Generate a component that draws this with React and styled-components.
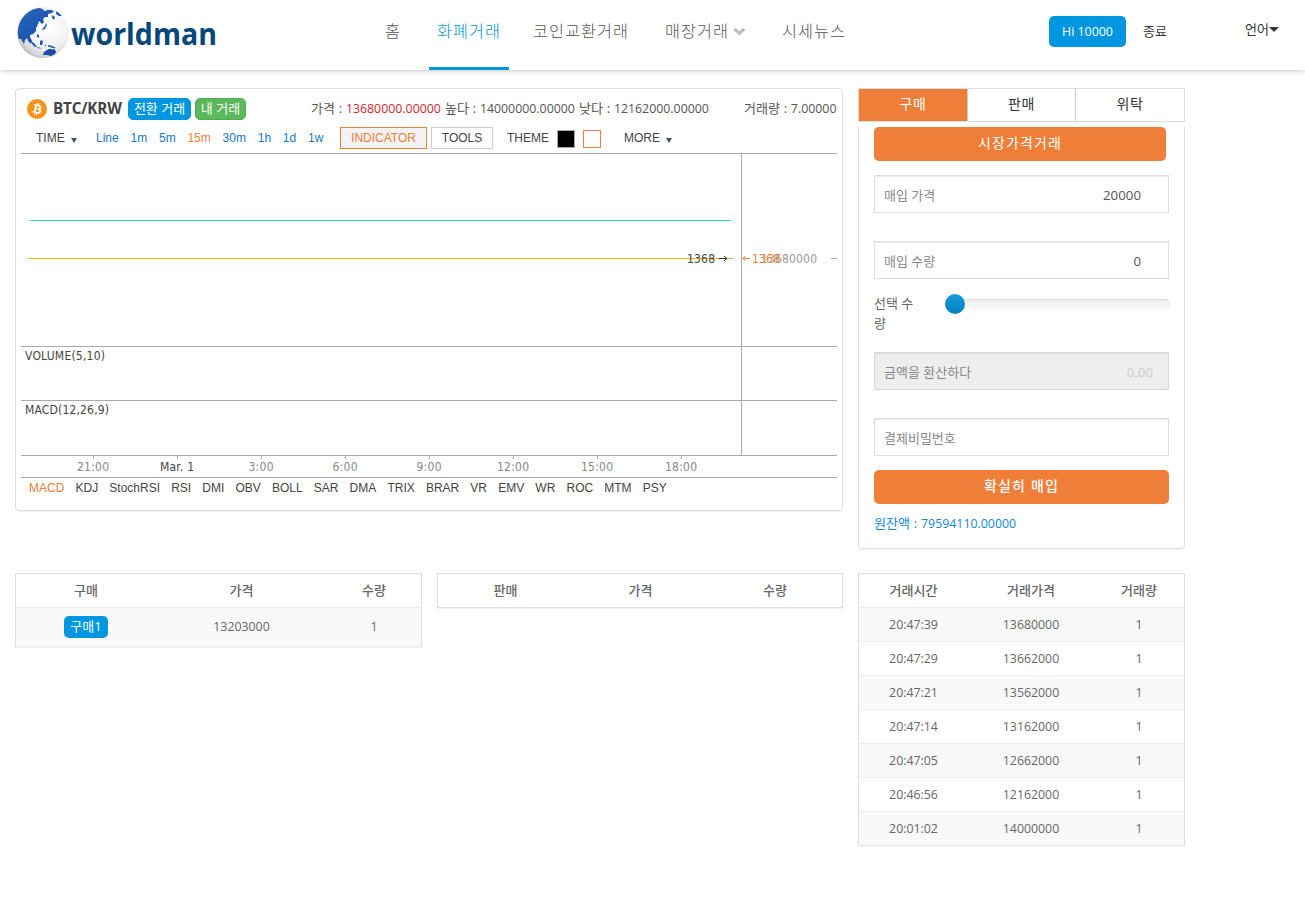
import React from 'react';
import styled, { createGlobalStyle, css } from 'styled-components';

const GlobalStyle = createGlobalStyle`
  * { box-sizing: border-box; }
  body {
    margin: 0;
    background: #fff;
    color: #666;
    font: 13px/20px "Open Sans", "Noto Sans CJK KR", sans-serif;
  }
  #root { height: 898px; overflow: hidden; }
`;

const ORANGE = '#ee7e38';
const BLUE = '#0096e0';

/* ---------- header ---------- */
const Header = styled.header`
  display: flex;
  height: 70px;
  background: #fff;
  box-shadow: 0 1px 5px rgba(0, 0, 0, 0.22);
`;
const Brand = styled.a`
  width: 377px;
  padding: 4px 0 0 15px;
`;
const Nav = styled.nav`
  display: flex;
  width: 672px;
`;
const NavItem = styled.a`
  display: flex;
  align-items: center;
  gap: 4px;
  height: 70px;
  padding: 0 0 5px 8px;
  margin-right: ${(p) => p.$gap}px;
  width: ${(p) => p.$width}px;
  font-size: 16.3px;
  font-weight: 300;
  letter-spacing: 1px;
  white-space: nowrap;
  color: ${(p) => (p.$active ? BLUE : '#555')};
  border-bottom: 3px solid ${(p) => (p.$active ? BLUE : 'transparent')};
`;
const Account = styled.div`
  display: flex;
  align-items: flex-start;
  padding-top: 16px;
  color: #333;
`;
const UserButton = styled.a`
  width: 77px;
  height: 31px;
  border-radius: 5px;
  background: ${BLUE};
  color: #fff;
  font-size: 12.4px;
  font-weight: 500;
  line-height: 31px;
  text-align: center;
`;
const Logout = styled.a`
  margin: 5px 0 0 17px;
`;
const Language = styled.a`
  display: flex;
  align-items: center;
  margin: 3px 0 0 78px;
`;

/* ---------- page ---------- */
const Page = styled.main`
  display: grid;
  grid-template-columns: 828px 327px;
  column-gap: 15px;
  padding: 18px 0 0 15px;
  align-items: start;
`;
const Column = styled.div`
  display: flex;
  flex-direction: column;
`;
const Panel = styled.section`
  height: 423px;
  padding: 0 5px;
  border: 1px solid #ddd;
  border-radius: 4px;
  box-shadow: 0 1px 1px rgba(0, 0, 0, 0.05);
`;
const Ticker = styled.div`
  display: flex;
  align-items: center;
  height: 38px;
  padding: 1px 0 0 6px;
  color: #555;
  white-space: nowrap;
`;
const Pair = styled.strong`
  width: 75px;
  margin-left: 6px;
  padding-bottom: 2px;
  font-size: 15.2px;
  font-weight: 700;
  letter-spacing: -0.15px;
  color: #444;
`;
const Tag = styled.a`
  height: 22px;
  width: ${(p) => p.$width}px;
  margin-right: 4px;
  border-radius: 5px;
  background: ${(p) => (p.$green ? '#5cb85c' : BLUE)};
  border: 1px solid ${(p) => (p.$green ? '#4cae4c' : BLUE)};
  color: #fff;
  font-size: 13px;
  line-height: 19px;
  text-align: center;
`;
const Quote = styled.span`
  margin-left: ${(p) => p.$left || 0}px;
  width: ${(p) => p.$width}px;
  word-spacing: 0.4px;
`;
const Num = styled.span`
  font-size: 12.35px;
  color: ${(p) => p.$color || 'inherit'};
`;
const Toolbar = styled.div`
  display: flex;
  align-items: center;
  height: 26px;
  padding: 0 0 4px 15px;
  font: 12px/20px "Liberation Sans", Arial, sans-serif;
  color: #444;
`;
const Menu = styled.span`
  display: flex;
  align-items: center;
  gap: 6px;
  width: ${(p) => p.$width}px;
`;
const Caret = styled.i`
  margin-top: 5px;
  border: 3.5px solid transparent;
  border-top: 5px solid #435467;
  border-bottom: 0;
`;
const Periods = styled.div`
  display: flex;
  gap: 11.8px;
  width: 244px;
`;
const Period = styled.a`
  color: ${(p) => (p.$active ? ORANGE : '#1478c8')};
`;
const ToolButton = styled.a`
  width: ${(p) => p.$width}px;
  height: 22px;
  margin-right: 4px;
  border: 1px solid ${(p) => (p.$active ? ORANGE : '#ccc')};
  background: ${(p) => (p.$active ? '#f3f3f3' : '#fff')};
  color: ${(p) => (p.$active ? ORANGE : '#444')};
  line-height: 20px;
  text-align: center;
`;
const ThemeLabel = styled.span`
  width: 50px;
  margin-left: 10px;
`;
const Swatch = styled.i`
  width: 18px;
  height: 18px;
  margin: 2px 8px 0 0;
  background: ${(p) => p.$fill};
  border: 1px solid ${(p) => p.$edge};
`;
const MoreMenu = styled(Menu)`
  margin-left: 15px;
`;
const Chart = styled.svg`
  display: block;
  font: 12px "DejaVu Sans Condensed", "DejaVu Sans", sans-serif;
`;
const Indicators = styled.div`
  display: flex;
  gap: 11.15px;
  padding: 1px 0 0 8px;
  font: 12px/19px "Liberation Sans", Arial, sans-serif;
  color: #444;
`;
const Indicator = styled.a`
  color: ${(p) => (p.$active ? ORANGE : 'inherit')};
`;

/* ---------- order form ---------- */
const Tabs = styled.div`
  display: grid;
  grid-template-columns: 109px 108px 108px;
  height: 34px;
  border: 1px solid #ddd;
`;
const Tab = styled.a`
  font-size: 14px;
  letter-spacing: 0.7px;
  line-height: 30px;
  text-align: center;
  color: ${(p) => (p.$active ? '#fff' : '#333')};
  background: ${(p) => (p.$active ? ORANGE : '#fff')};
  border-right: 1px solid #ccc;
  &:last-child { border-right: 0; }
`;
const Form = styled.form`
  display: flex;
  flex-direction: column;
  height: 422px;
  margin-top: 5px;
  padding: 0 15px;
  border: 1px solid #ddd;
  border-top: 0;
  border-radius: 0 0 4px 4px;
  box-shadow: 0 1px 1px rgba(0, 0, 0, 0.05);
`;
const Submit = styled.button`
  width: ${(p) => p.$width}px;
  height: 34px;
  margin-top: ${(p) => p.$top || 0}px;
  padding: 0 0 2px;
  border: 0;
  border-radius: 5px;
  background: ${ORANGE};
  color: #fff;
  font: ${(p) => p.$weight || 400} 14px/32px "Open Sans", "Noto Sans CJK KR", sans-serif;
  letter-spacing: 1.15px;
  text-align: center;
`;
const Field = styled.label`
  display: flex;
  justify-content: space-between;
  align-items: center;
  width: 295px;
  height: 38px;
  margin-top: ${(p) => p.$top}px;
  padding: 2px ${(p) => (p.$disabled ? 15 : 27)}px 0 9px;
  border: 1px solid #ddd;
  box-shadow: inset 0 1px 1px rgba(0, 0, 0, 0.075);
  color: #888;
  ${(p) => p.$disabled && css`background: #eee; border-color: #d8d8d8;`}
`;
const Value = styled.span`
  font-size: 13.3px;
  color: ${(p) => (p.$muted ? '#ccc' : '#555')};
`;
const SliderRow = styled.div`
  display: flex;
  justify-content: space-between;
  width: 295px;
  height: 40px;
  margin-top: 14px;
`;
const SliderLabel = styled.span`
  width: 44px;
`;
const Track = styled.div`
  width: 224px;
  height: 10px;
  margin-top: 6px;
  border-radius: 4px;
  background: linear-gradient(#f0f0f0, #f8f8f8);
  box-shadow: inset 0 1px 2px rgba(0, 0, 0, 0.1);
`;
const Handle = styled.div`
  width: 20px;
  height: 20px;
  margin-top: -5px;
  border-radius: 50%;
  background: linear-gradient(#149bdf, #0480be);
`;
const Balance = styled.div`
  margin-top: 9px;
  word-spacing: 0.5px;
  color: #1088dc;
`;

/* ---------- tables ---------- */
const BookRow = styled.div`
  display: grid;
  grid-template-columns: 407px 406px;
  column-gap: 15px;
  align-items: start;
  margin-top: 62px;
`;
const Table = styled.div`
  margin-top: ${(p) => p.$top || 0}px;
  border: 1px solid #ddd;
  border-bottom-color: ${(p) => (p.$empty ? '#ddd' : '#eee')};
  box-shadow: 0 1px 1px rgba(0, 0, 0, 0.05);
`;
const Row = styled.div`
  display: grid;
  grid-template-columns: ${(p) => p.$cols};
  align-items: center;
  justify-items: center;
  height: ${(p) => p.$height || 34}px;
  padding-top: ${(p) => (p.$height ? 0 : 1)}px;
  padding-bottom: ${(p) => (p.$height ? 1 : 0)}px;
  font-size: 12.35px;
  background: ${(p) => (p.$odd ? '#f9f9f9' : '#fff')};
  border-top: 1px solid #eee;
`;
const HeadRow = styled(Row)`
  height: 33px;
  border-top: 0;
  padding: 0 0 2px;
  font-size: 13px;
  font-weight: 500;
`;
const BuyTag = styled.span`
  width: 44px;
  height: 22px;
  margin-top: 1px;
  border-radius: 5px;
  background: ${BLUE};
  color: #fff;
  font-size: 13px;
  line-height: 21px;
  text-align: center;
`;

const Logo = () => (
  <svg width="225" height="60" viewBox="15 4 225 60">
    <defs>
      <radialGradient id="sea" cx="0.6" cy="0.4" r="0.68">
        <stop offset="0" stopColor="#fff" />
        <stop offset="0.6" stopColor="#f1f1f2" />
        <stop offset="0.85" stopColor="#d3d4d6" />
        <stop offset="1" stopColor="#a8aaae" />
      </radialGradient>
      <linearGradient id="land" x1="0" y1="0" x2="0.7" y2="1">
        <stop offset="0" stopColor="#2c69bd" />
        <stop offset="0.5" stopColor="#1f5bb5" />
        <stop offset="1" stopColor="#174b98" />
      </linearGradient>
      <clipPath id="ball"><circle cx="43" cy="32.500" r="25.200" /></clipPath>
    </defs>
    <circle cx="43" cy="32.500" r="25.700" fill="url(#sea)" />
    <g fill="url(#land)" clipPath="url(#ball)">
      <path d="M17 28l3-8 5-6 7-5 7-1 4 1 1 2 4-1 3 0 3 1-2 2-4 1 0 3-3 0-2 2 1 3-2 2-3-3-1 3-2 4 0 3-3 3-3 1 0 2 2 4-1 3-3-3-1-3-2 2-1 4-3-5-3 0-1-3z" />
      <path d="M56 11l4 2 2 3-3 0-3-2zM52 15l3 2-1 3-2-2zM46 23l1 2-2 4-3 1 1-2 2-2zM37 34l2 1 0 3-2-1zM31 41l3 2 3 4-2 0-3-3zM36 46.500l5 1.500 2 0-4 .5zM40 41l2-1 1 2-1 3-2 0zM45 44l1 1-1 2zM48 45l4 1 4 2-3 0-5-1.500zM44 52l3-2 2-1 3 0 1 1 1-2 2 4-1 2-4 2-4-1-4 0z" />
    </g>
    <text x="71" y="45" textLength="146" lengthAdjust="spacingAndGlyphs" fill="#04477c" fontFamily="Open Sans" fontWeight="700" fontSize="30">worldman</text>
  </svg>
);

const Chevron = () => (
  <svg width="13" height="9" viewBox="0 0 13 9">
    <path d="M1.5 1.8L6.4 6.4L11.3 1.8" fill="none" stroke="#bbb" strokeWidth="3" />
  </svg>
);

const Bitcoin = () => (
  <svg width="20" height="20" viewBox="0 0 32 32">
    <circle cx="16" cy="16" r="16" fill="#f7931a" />
    <path
      fill="#fff"
      d="M23.189 14.02c.314-2.096-1.283-3.223-3.465-3.975l.708-2.84-1.728-.43-.69 2.765c-.454-.114-.92-.22-1.385-.326l.695-2.783L15.596 6l-.708 2.839c-.376-.086-.746-.17-1.104-.26l.002-.009-2.384-.595-.46 1.846s1.283.294 1.256.312c.7.175.826.638.805 1.006l-.806 3.235c.048.012.11.03.18.057l-.183-.045-1.13 4.532c-.086.212-.303.531-.793.41.018.025-1.256-.313-1.256-.313l-.858 1.978 2.25.561c.418.105.828.215 1.231.318l-.715 2.872 1.727.43.708-2.84c.472.127.93.245 1.378.357l-.706 2.828 1.728.43.715-2.866c2.948.558 5.164.333 6.097-2.333.752-2.146-.037-3.385-1.588-4.192 1.13-.26 1.98-1.003 2.207-2.538zm-3.95 5.538c-.533 2.147-4.148.986-5.32.695l.95-3.805c1.172.293 4.929.872 4.37 3.11zm.535-5.569c-.487 1.953-3.495.96-4.47.717l.86-3.45c.975.243 4.118.696 3.61 2.733z"
    />
  </svg>
);

const TICKS = ['21:00', 'Mar. 1', '3:00', '6:00', '9:00', '12:00', '15:00', '18:00'];

const PriceChart = () => (
  <Chart width="816" height="325" viewBox="0 0 816 325">
    <path d="M0 .5H816M0 193.5H816M0 247.5H816M0 302.5H816M0 324.5H816M720.5 0V302M810 105.5H816" stroke="#aaa" fill="none" />
    <path d="M0 213.5H720" stroke="#f2f2f2" strokeDasharray="1 3" />
    <path d="M9 67.5H710" stroke="#35d3b0" />
    <path d="M7 105.5H712" stroke="#f5b80c" />
    <path d="M710 105.5H712" stroke="#4c9" />
    <g fill="#444">
      <text x="4" y="207" textLength="80">VOLUME(5,10)</text>
      <text x="4" y="261" textLength="84">MACD(12,26,9)</text>
      <text x="666" y="110" textLength="28">1368</text>
    </g>
    <path d="M698 105.5H706M703 103L706 105.5L703 108" stroke="#333" fill="none" />
    <text x="740" y="110" textLength="56" fill="#999">13680000</text>
    <text x="731" y="110" textLength="28" fill={ORANGE}>1368</text>
    <path d="M729 105.5H721.5M724.500 103L722 105.5L724.500 108" stroke={ORANGE} fill="none" />
    {TICKS.map((label, i) => (
      <g key={label}>
        <path d={`M${72.5 + i * 84} 303v3`} stroke="#aaa" />
        <text
          x={72 + i * 84}
          y="318"
          textAnchor="middle"
          textLength={label.length === 4 ? 25 : label.length === 5 ? 32 : 34}
          fill={i === 1 ? '#444' : '#888'}
        >
          {label}
        </text>
      </g>
    ))}
  </Chart>
);

const PERIODS = ['Line', '1m', '5m', '15m', '30m', '1h', '1d', '1w'];
const INDICATORS = ['MACD', 'KDJ', 'StochRSI', 'RSI', 'DMI', 'OBV', 'BOLL', 'SAR', 'DMA', 'TRIX', 'BRAR', 'VR', 'EMV', 'WR', 'ROC', 'MTM', 'PSY'];
const TRADES = [
  ['20:47:39', '13680000'],
  ['20:47:29', '13662000'],
  ['20:47:21', '13562000'],
  ['20:47:14', '13162000'],
  ['20:47:05', '12662000'],
  ['20:46:56', '12162000'],
  ['20:01:02', '14000000'],
];
const BUY_COLS = '140px 171px 94px';
const SELL_COLS = '135px 135px 134px';
const TRADE_COLS = '109px 126px 90px';

export default function App() {
  return (
    <>
      <GlobalStyle />
      <Header>
        <Brand><Logo /></Brand>
        <Nav>
          <NavItem $width={32} $gap={20}>홈</NavItem>
          <NavItem $width={80} $gap={16} $active>화폐거래</NavItem>
          <NavItem $width={112} $gap={20}>코인교환거래</NavItem>
          <NavItem $width={97} $gap={20}>매장거래<Chevron /></NavItem>
          <NavItem $width={80} $gap={0}>시세뉴스</NavItem>
        </Nav>
        <Account>
          <UserButton>Hi 10000</UserButton>
          <Logout>종료</Logout>
          <Language>
            언어
            <svg width="10" height="5"><path d="M0 0H10L5 5Z" fill="#333" /></svg>
          </Language>
        </Account>
      </Header>
      <Page>
        <Column>
          <Panel>
            <Ticker>
              <Bitcoin />
              <Pair>BTC/KRW</Pair>
              <Tag $width={63}>전환 거래</Tag>
              <Tag $width={51} $green>내 거래</Tag>
              <Quote $left={61} $width={134}>가격 : <Num $color="#d9232e">13680000.00000</Num></Quote>
              <Quote $width={134}>높다 : <Num>14000000.00000</Num></Quote>
              <Quote $width={165}>낮다 : <Num>12162000.00000</Num></Quote>
              <Quote>거래량 : <Num>7.00000</Num></Quote>
            </Ticker>
            <Toolbar>
              <Menu $width={60}>TIME<Caret /></Menu>
              <Periods>
                {PERIODS.map((p) => <Period key={p} $active={p === '15m'}>{p}</Period>)}
              </Periods>
              <ToolButton $width={87} $active>INDICATOR</ToolButton>
              <ToolButton $width={62}>TOOLS</ToolButton>
              <ThemeLabel>THEME</ThemeLabel>
              <Swatch $fill="#000" $edge="#aaa" />
              <Swatch $fill="#fff" $edge={ORANGE} />
              <MoreMenu $width={60}>MORE<Caret /></MoreMenu>
            </Toolbar>
            <PriceChart />
            <Indicators>
              {INDICATORS.map((n) => <Indicator key={n} $active={n === 'MACD'}>{n}</Indicator>)}
            </Indicators>
          </Panel>
          <BookRow>
            <Table>
              <HeadRow $cols={BUY_COLS}><span>구매</span><span>가격</span><span>수량</span></HeadRow>
              <Row $cols={BUY_COLS} $height={39} $odd><BuyTag>구매1</BuyTag><span>13203000</span><span>1</span></Row>
            </Table>
            <Table $empty>
              <HeadRow $cols={SELL_COLS}><span>판매</span><span>가격</span><span>수량</span></HeadRow>
            </Table>
          </BookRow>
        </Column>
        <Column>
          <Tabs>
            <Tab $active>구매</Tab>
            <Tab>판매</Tab>
            <Tab>위탁</Tab>
          </Tabs>
          <Form>
            <Submit type="button" $width={292}>시장가격거래</Submit>
            <Field $top={14}>매입 가격<Value>20000</Value></Field>
            <Field $top={28}>매입 수량<Value>0</Value></Field>
            <SliderRow>
              <SliderLabel>선택 수량</SliderLabel>
              <Track><Handle /></Track>
            </SliderRow>
            <Field $top={19} $disabled>금액을 환산하다<Value $muted>0.00</Value></Field>
            <Field $top={28}>결제비밀번호</Field>
            <Submit type="button" $width={295} $top={14} $weight={500}>확실히 매입</Submit>
            <Balance>원잔액 : <Num>79594110.00000</Num></Balance>
          </Form>
          <Table $top={24}>
            <HeadRow $cols={TRADE_COLS}><span>거래시간</span><span>거래가격</span><span>거래량</span></HeadRow>
            {TRADES.map(([time, price], i) => (
              <Row key={time} $cols={TRADE_COLS} $odd={i % 2 === 0}><span>{time}</span><span>{price}</span><span>1</span></Row>
            ))}
          </Table>
        </Column>
      </Page>
    </>
  );
}
